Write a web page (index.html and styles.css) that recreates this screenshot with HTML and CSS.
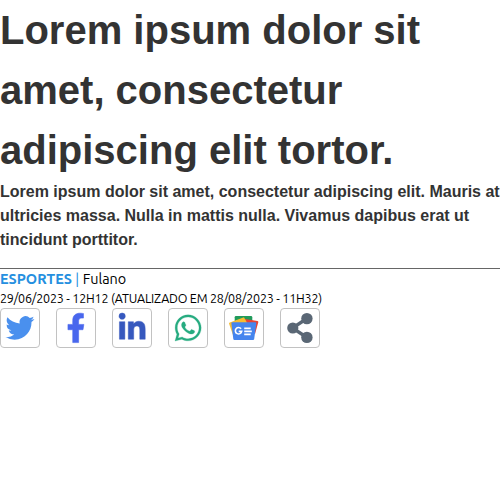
FILE: index.html
```html
<!DOCTYPE html>
<html lang="pt-BR">
<head>
<meta charset="utf-8">
<title>Lorem ipsum</title>
<link rel="stylesheet" href="styles.css">
</head>
<body>
<header class="article-header">
  <h1 class="title">Lorem ipsum dolor sit amet, consectetur adipiscing elit tortor.</h1>
  <h2 class="summary">Lorem ipsum dolor sit amet, consectetur adipiscing elit. Mauris at ultricies massa. Nulla in mattis nulla. Vivamus dapibus erat ut tincidunt porttitor.</h2>
  <div class="byline"><a class="section">ESPORTES</a> <span class="divider">|</span> <span class="author">Fulano</span></div>
  <div class="date">29/06/2023 - 12H12 (ATUALIZADO EM 28/08/2023 - 11H32)</div>
  <nav class="share">
    <a class="button"><svg viewBox="0 0 40 40"><path transform="translate(5.5 5.500) scale(1.205)" fill="#4a90ee" d="M23.953 4.57a10 10 0 01-2.825.775 4.958 4.958 0 002.163-2.723c-.951.555-2.005.959-3.127 1.184a4.92 4.92 0 00-8.384 4.482C7.69 8.095 4.067 6.13 1.64 3.162a4.822 4.822 0 00-.666 2.475c0 1.71.87 3.213 2.188 4.096a4.904 4.904 0 01-2.228-.616v.06a4.923 4.923 0 003.946 4.827 4.996 4.996 0 01-2.212.085 4.936 4.936 0 004.604 3.417 9.867 9.867 0 01-6.102 2.105c-.39 0-.779-.023-1.17-.067a13.995 13.995 0 007.557 2.209c9.053 0 13.998-7.496 13.998-13.985 0-.21 0-.42-.015-.63A9.935 9.935 0 0024 4.590z"/></svg></a>
    <a class="button"><svg viewBox="0 0 40 40"><path transform="translate(10.6 5.200) scale(.0588 .0574)" fill="#4967ed" stroke="#4967ed" stroke-width="10" d="M279.14 288l14.22-92.66h-88.91v-60.13c0-25.35 12.42-50.06 52.24-50.06h30V6.26S260.43 0 225.36 0c-73.22 0-121.08 44.38-121.08 124.72v70.62H22.89V288h81.39v224h100.17V288z"/></svg></a>
    <a class="button"><svg viewBox="0 0 40 40"><path transform="translate(7 5) scale(.0585)" fill="#3658be" stroke="#3658be" stroke-width="8" d="M100.28 448H7.4V148.9h92.88zM53.79 108.1C24.09 108.1 0 83.5 0 53.8a53.79 53.79 0 01107.58 0c0 29.7-24.1 54.3-53.79 54.3zM447.9 448h-92.68V302.4c0-34.7-.7-79.2-48.29-79.2-48.29 0-55.69 37.7-55.69 76.7V448h-92.78V148.9h89.08v40.8h1.3c12.4-23.5 42.69-48.3 87.88-48.3 94 0 111.28 61.9 111.28 142.3V448z"/></svg></a>
    <a class="button"><svg viewBox="0 0 40 40"><path transform="translate(7 5) scale(.0585)" fill="#26ab80" stroke="#26ab80" stroke-width="4" d="M380.9 97.1C339 55.1 283.2 32 223.9 32c-122.4 0-222 99.6-222 222 0 39.1 10.2 77.3 29.6 111L0 480l117.7-30.9c32.4 17.7 68.9 27 106.1 27h.1c122.3 0 224.1-99.6 224.1-222 0-59.3-25.2-115-67.1-157zm-157 341.6c-33.2 0-65.7-8.9-94-25.7l-6.7-4-69.8 18.3L72 359.2l-4.4-7c-18.5-29.4-28.2-63.3-28.2-98.2 0-101.7 82.8-184.5 184.6-184.5 49.3 0 95.6 19.2 130.4 54.1 34.8 34.9 56.2 81.2 56.1 130.5 0 101.8-84.9 184.6-186.6 184.6zm101.2-138.2c-5.5-2.8-32.8-16.2-37.9-18-5.1-1.9-8.8-2.8-12.5 2.8-3.7 5.6-14.3 18-17.6 21.8-3.2 3.7-6.5 4.2-12 1.4-32.6-16.3-54-29.1-75.5-66-5.7-9.8 5.7-9.1 16.3-30.3 1.8-3.7.9-6.9-.5-9.7-1.4-2.8-12.5-30.1-17.1-41.2-4.5-10.8-9.1-9.3-12.5-9.5-3.2-.2-6.9-.2-10.6-.2-3.7 0-9.7 1.4-14.8 6.9-5.1 5.6-19.4 19-19.4 46.3 0 27.3 19.9 53.7 22.6 57.4 2.8 3.7 39.1 59.7 94.8 83.8 35.2 15.2 49 16.5 66.6 13.9 10.7-1.6 32.8-13.4 37.4-26.4 4.6-13 4.6-24.1 3.2-26.4-1.3-2.5-5-3.9-10.5-6.6z"/></svg></a>
    <a class="button"><svg viewBox="0 0 40 40">
      <path fill="#219b5b" d="M12 8h15a1.3 1.3 0 011.3 1.3V19H10.700V9.300Q10.700 8 12 8z"/>
      <path fill="#e84335" d="M21 11l12.500 2q1.100.2.800 1.200L31 26H19z"/>
      <path fill="#f8bd32" d="M5.800 14.500L20 9.200l5 9L9 27 5 15.500q-.2-.7.800-1z"/>
      <path fill="#4585ee" d="M8.500 14.300h22.800q1.200 0 1 1.200l-2.100 15.400q-.1 1.100-1.200 1.100H10.500q-1.100 0-1.200-1.100L7.400 15.500q-.1-1.200 1.100-1.200z"/>
      <path fill="none" stroke="#fff" stroke-width="1.600" d="M17.100 20.800a3.200 3.200 0 10.600 2.600h-3"/>
      <path stroke="#fff" stroke-width="1.700" d="M20.200 20.300h6.500M20.200 23.300h7.600M20.200 26.400h6.500"/>
    </svg></a>
    <a class="button"><svg viewBox="0 0 40 40"><path fill="none" stroke="#5a6775" stroke-width="3.300" d="M26.900 10.500L12.500 20l14.400 9.500"/><g fill="#5a6775"><circle cx="12.800" cy="20" r="5.600"/><circle cx="26.900" cy="10.600" r="5.700"/><circle cx="26.900" cy="29.400" r="5.700"/></g></svg></a>
  </nav>
</header>
</body>
</html>
```
FILE: styles.css
```css
body {
  margin: 0;
  background: #fff;
  color: #000;
  font-family: Ubuntu, "Noto Sans", sans-serif;
}
.title, .summary {
  margin: 0;
  color: #333;
  font-family: "Liberation Sans", Arial, sans-serif;
  font-weight: 700;
}
.title {
  font-size: 40px;
  line-height: 60px;
}
.summary {
  padding-bottom: 16px;
  border-bottom: 1px solid #666;
  font-size: 16px;
  line-height: 24px;
}
.byline {
  height: 21px;
  font-size: 14.4px;
  line-height: 20px;
}
.section {
  color: #258fe0;
  font-weight: 700;
}
.divider {
  margin-right: 0.5px;
  color: #258fe0;
}
.date {
  height: 18px;
  font-size: 12.5px;
  line-height: 16px;
  letter-spacing: -0.2px;
  white-space: nowrap;
}
.share {
  display: flex;
  gap: 16px;
}
.button {
  box-sizing: border-box;
  width: 40px;
  height: 40px;
  border: 1px solid #c2c2c2;
  border-radius: 4px;
}
.button svg {
  display: block;
  width: 40px;
  height: 40px;
  margin: -1px;
}
```
